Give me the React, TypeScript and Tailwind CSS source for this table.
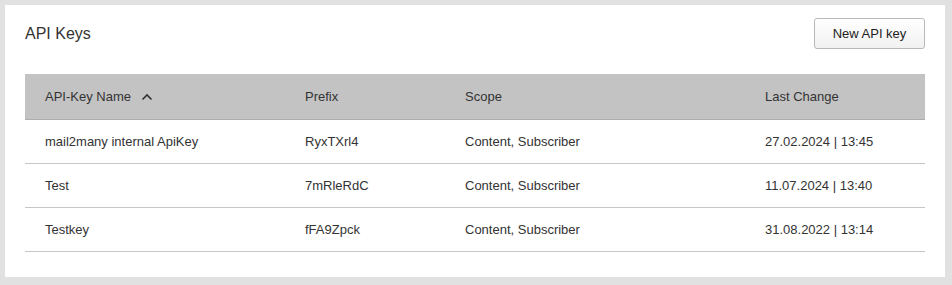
import React from 'react';

interface ApiKeyRow {
    name: string;
    prefix: string;
    scope: string;
    changed: string;
}

const rows: ApiKeyRow[] = [
    { name: 'mail2many internal ApiKey', prefix: 'RyxTXrl4', scope: 'Content, Subscriber', changed: '27.02.2024 | 13:45' },
    { name: 'Test', prefix: '7mRleRdC', scope: 'Content, Subscriber', changed: '11.07.2024 | 13:40' },
    { name: 'Testkey', prefix: 'fFA9Zpck', scope: 'Content, Subscriber', changed: '31.08.2022 | 13:14' },
];

const cols = 'grid grid-cols-[260px_160px_300px_180px] items-center';

const App: React.FC = () => {
    return (
        <div className="min-h-[285px] bg-[#e1e1e1] p-[5px] text-[#333] font-['Liberation_Sans',Arial,sans-serif]">
            <div className="w-[940px] bg-white px-5 pt-[13px] pb-[25px]">
                <div className="flex items-center justify-between">
                    <h1 className="text-[16px] leading-5">API Keys</h1>
                    <button className="h-[31px] w-[111px] rounded-[3px] border border-[#b8b8b8] bg-gradient-to-b from-white to-[#f1f1f1] text-[13px] text-[#222]">
                        New API key
                    </button>
                </div>

                <div className="mt-[25px] text-[13px]">
                    <div className={`${cols} h-[46px] bg-[#c3c3c3] border-b border-[#adadad]`}>
                        <div className="flex items-center pl-5">
                            API-Key Name
                            <svg className="ml-[10px]" width="12" height="8" viewBox="0 0 12 8" fill="none">
                                <polyline points="1.5,6.5 6,2 10.5,6.5" stroke="#333" strokeWidth="1.6" />
                            </svg>
                        </div>
                        <div className="pl-5">Prefix</div>
                        <div className="pl-5">Scope</div>
                        <div className="pl-5">Last Change</div>
                    </div>

                    {rows.map((row) => (
                        <div key={row.prefix} className={`${cols} h-[44px] border-b border-[#c6c6c6]`}>
                            <div className="pl-5">{row.name}</div>
                            <div className="pl-5">{row.prefix}</div>
                            <div className="pl-5">{row.scope}</div>
                            <div className="pl-5">{row.changed}</div>
                        </div>
                    ))}
                </div>
            </div>
        </div>
    );
};

export default App;
